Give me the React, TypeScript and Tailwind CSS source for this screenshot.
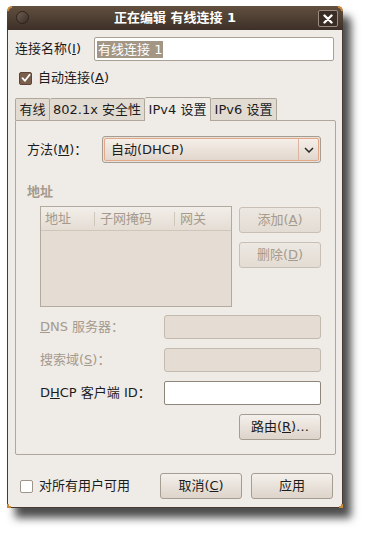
import React from 'react';

const font = { fontFamily: '"DejaVu Sans", "Noto Sans CJK SC", sans-serif' };

const Btn: React.FC<{ children: React.ReactNode; disabled?: boolean; className?: string }> = ({ children, disabled, className = '' }) => (
  <div
    className={`flex items-center justify-center h-[26px] w-[82px] rounded-[3px] border text-[13px] ${
      disabled
        ? 'border-[#c9c0b5] bg-gradient-to-b from-[#ede8e2] to-[#e3dcd3] text-[#a59a8c]'
        : 'border-[#a69d92] bg-gradient-to-b from-[#f4f0eb] to-[#ddd4ca] text-[#1c1c1c]'
    } ${className}`}
  >
    {children}
  </div>
);

const App: React.FC = () => {
  return (
    <div className="w-[367px] h-[533px] bg-white overflow-hidden text-[#1c1c1c] text-[13px]" style={font}>
      <div className="ml-[7px] mt-[6px] w-[336px] h-[502px] flex flex-col rounded-t-[6px] shadow-[8px_10px_9px_rgba(0,0,0,0.7)]">
        {/* Title bar */}
        <div className="relative h-[24px] flex items-center justify-center rounded-t-[6px] bg-gradient-to-b from-[#62503f] to-[#3d3028]">
          <div className="absolute left-0 top-0 w-[5px] h-[5px] rounded-tl-[6px] border-t-2 border-l-2 border-[#c98a3c]" />
          <div className="absolute right-0 top-0 w-[5px] h-[5px] rounded-tr-[6px] border-t-2 border-r-2 border-[#c98a3c]" />
          <div className="absolute left-[9px] top-[5px] w-[13px] h-[13px] rounded-full border border-[#2c221c] bg-gradient-to-br from-[#6f5d50] to-[#3b2f27]" />
          <span className="text-white font-bold text-[13px]">正在编辑 有线连接 1</span>
          <div className="absolute right-[5px] top-[4px] w-[20px] h-[17px] rounded-[2px] border border-[#9a8c80] bg-[#3a2d25] flex items-center justify-center">
            <svg width="10" height="10" viewBox="0 0 10 10">
              <path d="M1.5 1.5 L8.5 8.5 M8.5 1.5 L1.5 8.5" stroke="white" strokeWidth="2.4" strokeLinecap="round" />
            </svg>
          </div>
        </div>

        {/* Body */}
        <div className="relative flex-1 flex flex-col bg-[#efebe7] border-x border-b border-[#4a3b31] px-[7px] pt-[7px]">
          <div className="flex items-center h-[24px]">
            <span className="w-[79px]">
              连接名称(<span className="underline">I</span>)
            </span>
            <div className="flex-1 h-[24px] bg-white border border-[#a9a095] rounded-[2px] flex items-center px-[2px] mr-[1px]">
              <span className="bg-[#a39685] text-white leading-[17px] px-[1px]">有线连接 1</span>
            </div>
          </div>

          <div className="flex items-center h-[20px] mt-[7px] pl-[4px]">
            <div className="w-[13px] h-[13px] rounded-[2px] bg-[#7b5f4d] border border-[#5e4537] flex items-center justify-center">
              <svg width="10" height="10" viewBox="0 0 10 10">
                <path d="M1.5 5.2 L4 7.8 L8.6 1.8" stroke="white" strokeWidth="1.8" fill="none" strokeLinecap="round" strokeLinejoin="round" />
              </svg>
            </div>
            <span className="ml-[6px]">
              自动连接(<span className="underline">A</span>)
            </span>
          </div>

          {/* Tabs */}
          <div className="flex items-end h-[24px] mt-[8px]">
            <div className="h-[22px] w-[35px] flex items-center justify-center bg-[#e2dbd2] border border-b-0 border-[#b0a79b] rounded-t-[2px]">有线</div>
            <div className="h-[22px] w-[95px] flex items-center justify-center bg-[#e2dbd2] border border-b-0 border-l-0 border-[#b0a79b] rounded-t-[2px]">802.1x 安全性</div>
            <div className="h-[24px] w-[66px] flex items-center justify-center bg-[#efebe7] border border-b-0 border-l-0 border-[#b0a79b] rounded-t-[2px] relative top-[1px]">IPv4 设置</div>
            <div className="h-[22px] w-[66px] flex items-center justify-center bg-[#e2dbd2] border border-b-0 border-l-0 border-[#b0a79b] rounded-t-[2px]">IPv6 设置</div>
          </div>

          {/* Panel */}
          <div className="h-[335px] w-[321px] border border-[#b0a79b] rounded-b-[2px] rounded-tr-[2px] bg-[#efebe7] flex flex-col pl-[11px] pr-[14px] pt-[15px]">
            <div className="flex items-center h-[27px]">
              <span className="w-[75px]">
                方法(<span className="underline">M</span>)：
              </span>
              <div className="flex-1 h-[27px] rounded-[3px] border border-[#a69d92] p-[1px] bg-[#e9e2da]">
                <div className="h-full rounded-[2px] border border-[#e3a88a] bg-gradient-to-b from-[#f5efe9] to-[#e2d7cd] flex items-center">
                  <span className="flex-1 pl-[6px]">自动(DHCP)</span>
                  <div className="w-[20px] h-full border-l border-[#d9b4a0] flex items-center justify-center">
                    <svg width="10" height="6" viewBox="0 0 10 6">
                      <path d="M1 1 L5 5 L9 1" stroke="#2a2a2a" strokeWidth="1.5" fill="none" />
                    </svg>
                  </div>
                </div>
              </div>
            </div>

            <div className="mt-[21px] h-[16px] flex items-center font-bold text-[#a59a8c]">地址</div>

            <div className="mt-[6px] flex pl-[13px] gap-[7px]">
              <div className="w-[192px] h-[101px] border border-[#b3a99d] bg-[#e5ddd4] flex flex-col">
                <div className="h-[24px] flex items-center bg-gradient-to-b from-[#f2eee9] to-[#e4ddd4] border-b border-[#cfc6bb] text-[#a59a8c]">
                  <div className="w-[54px] pl-[4px] border-r border-[#cfc6bb] h-[14px] flex items-center">地址</div>
                  <div className="w-[80px] pl-[5px] border-r border-[#cfc6bb] h-[14px] flex items-center">子网掩码</div>
                  <div className="pl-[5px] h-[14px] flex items-center">网关</div>
                </div>
              </div>
              <div className="flex flex-col gap-[9px] pt-[1px]">
                <Btn disabled>
                  添加(<span className="underline">A</span>)
                </Btn>
                <Btn disabled>
                  删除(<span className="underline">D</span>)
                </Btn>
              </div>
            </div>

            <div className="mt-[8px] flex items-center h-[24px] pl-[13px] text-[#a59a8c]">
              <span className="w-[124px]">
                <span className="underline">D</span>NS 服务器：
              </span>
              <div className="flex-1 h-[24px] border border-[#c3b9ad] rounded-[3px] bg-[#e5ddd4]" />
            </div>
            <div className="mt-[9px] flex items-center h-[24px] pl-[13px] text-[#a59a8c]">
              <span className="w-[124px]">
                搜索域(<span className="underline">S</span>)：
              </span>
              <div className="flex-1 h-[24px] border border-[#c3b9ad] rounded-[3px] bg-[#e5ddd4]" />
            </div>
            <div className="mt-[9px] flex items-center h-[24px] pl-[13px]">
              <span className="w-[124px]">
                D<span className="underline">H</span>CP 客户端 ID：
              </span>
              <div className="flex-1 h-[24px] border border-[#8f867b] rounded-[2px] bg-white" />
            </div>
            <div className="mt-[9px] flex justify-end">
              <Btn>
                路由(<span className="underline">R</span>)…
              </Btn>
            </div>
          </div>

          {/* Bottom row */}
          <div className="mt-[18px] h-[26px] flex items-center">
            <div className="ml-[5px] w-[13px] h-[13px] rounded-[2px] border border-[#9e958a] bg-white" />
            <span className="ml-[6px] flex-1">对所有用户可用</span>
            <Btn className="mr-[9px]">
              取消(<span className="underline">C</span>)
            </Btn>
            <Btn className="mr-[2px]">应用</Btn>
          </div>

          <div className="absolute -left-px -bottom-px w-[4px] h-[4px] border-l-2 border-b-2 border-[#c98a3c]" />
          <div className="absolute -right-px -bottom-px w-[4px] h-[4px] border-r-2 border-b-2 border-[#c98a3c]" />
        </div>
      </div>
    </div>
  );
};

export default App;
